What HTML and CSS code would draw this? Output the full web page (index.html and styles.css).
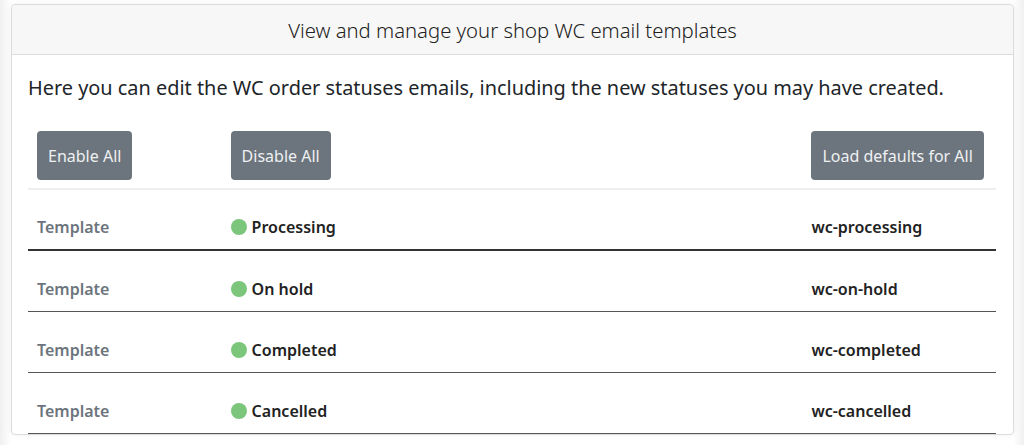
FILE: index.html
```html
<!DOCTYPE html>
<html lang="en">
<head>
<meta charset="utf-8">
<title>WC email templates</title>
<link rel="stylesheet" href="styles.css">
</head>
<body>
<div class="page">
  <div class="card">
    <div class="card-header">View and manage your shop WC email templates</div>
    <div class="card-body">
      <p class="intro">Here you can edit the WC order statuses emails, including the new statuses you may have created.</p>
      <table class="tpl-table">
        <colgroup><col class="c1"><col class="c2"><col class="c3"></colgroup>
        <thead>
          <tr class="actions">
            <td><button class="btn">Enable All</button></td>
            <td><button class="btn">Disable All</button></td>
            <td><button class="btn">Load defaults for All</button></td>
          </tr>
        </thead>
        <tbody>
          <tr class="first">
            <td class="label">Template</td>
            <td class="status"><span class="dot"></span>Processing</td>
            <td class="slug">wc-processing</td>
          </tr>
          <tr>
            <td class="label">Template</td>
            <td class="status"><span class="dot"></span>On hold</td>
            <td class="slug">wc-on-hold</td>
          </tr>
          <tr>
            <td class="label">Template</td>
            <td class="status"><span class="dot"></span>Completed</td>
            <td class="slug">wc-completed</td>
          </tr>
          <tr>
            <td class="label">Template</td>
            <td class="status"><span class="dot"></span>Cancelled</td>
            <td class="slug">wc-cancelled</td>
          </tr>
        </tbody>
      </table>
    </div>
  </div>
</div>
</body>
</html>
```

FILE: styles.css
```css
html, body {
  margin: 0;
  padding: 0;
  background: #ffffff;
  font-family: "Noto Sans", "Open Sans", sans-serif;
  color: #212529;
}

.page {
  padding: 4px 10px 0 11px;
  height: 445px;
  box-sizing: border-box;
  overflow: hidden;
  background: linear-gradient(to right, #f0f0f0 0, #ffffff 11px, #ffffff calc(100% - 11px), #f0f0f0 100%);
}

.card {
  background: #fff;
  border: 1px solid #dcdcdc;
  border-radius: 4px;
  box-shadow: 0 0 6px rgba(0,0,0,0.06);
}

.card-header {
  background: #f7f7f7;
  border-bottom: 1px solid #dcdcdc;
  border-radius: 4px 4px 0 0;
  height: 49px;
  display: flex;
  align-items: center;
  justify-content: center;
  font-size: 20.3px;
  font-weight: 300;
  color: #222;
}

.card-body {
  padding: 20px 17px 0 16px;
}

.intro {
  margin: 0 0 21px 0;
  font-size: 19.9px;
  line-height: 26px;
  color: #212529;
}

.tpl-table {
  width: 100%;
  border-collapse: collapse;
  table-layout: fixed;
}

.c1 { width: 20%; }
.c2 { width: 60%; }
.c3 { width: 20%; }

.tpl-table td {
  padding: 26px 9px 10px 9px;
  line-height: 24px;
  font-size: 16px;
  vertical-align: middle;
  border-bottom: 1px solid #555;
}

.tpl-table .actions td {
  padding: 9px 9px 8px 9px;
  border-bottom: 2px solid #eeeeee;
}

.tpl-table tr.first td {
  padding-top: 25px;
  padding-bottom: 10px;
  border-bottom: 2px solid #333;
}

.btn {
  height: 49px;
  padding: 0 11px;
  border: none;
  border-radius: 4px;
  background: #6c757d;
  color: #eef0f2;
  font-family: inherit;
  font-size: 16px;
}

.label {
  color: #6c757d;
  font-weight: 600;
}

.status {
  font-weight: 600;
  color: #222;
}

.dot {
  display: inline-block;
  width: 16px;
  height: 16px;
  border-radius: 50%;
  background: #7bc67b;
  margin-right: 5px;
  vertical-align: -2px;
}

.slug {
  font-weight: 600;
  color: #222;
}
```
